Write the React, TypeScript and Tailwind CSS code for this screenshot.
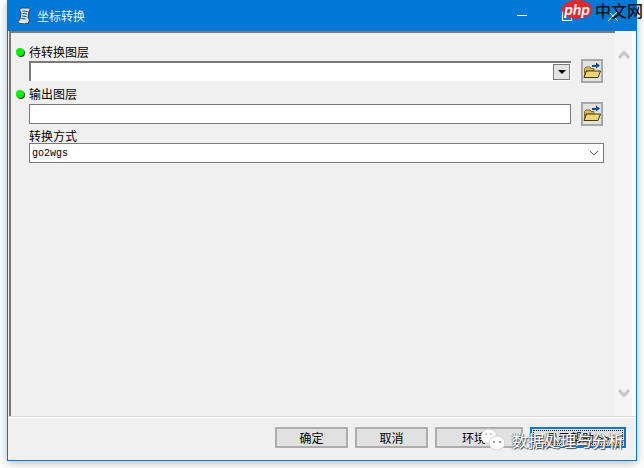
import React from "react";

const cjk = "font-['Microsoft_YaHei','Noto_Sans_CJK_SC','Noto_Sans',sans-serif]";

function FolderIcon() {
  return (
    <svg width="18" height="18" viewBox="0 0 18 18">
      <path d="M1.500 15V6.500L3 5h4l1 1.500h3V9H3z" fill="#d8b850" stroke="#8a7020" />
      <path d="M1 15.500 3.500 9H17.500L15 15.500z" fill="#f0d478" stroke="#4c3c08" />
      <path d="M9 3h4V0.500L17 3.500 13 6.500V5H9z" fill="#14508c" />
    </svg>
  );
}

function Dot() {
  return <span className="mr-[5px] h-[8px] w-[8px] shrink-0 rounded-full bg-[#00f000] shadow-[1px_1px_0_#444]" />;
}

function FolderButton() {
  return (
    <button className="ml-[10px] flex h-[24px] w-[22px] shrink-0 items-center justify-center border-2 border-[#a8a8a8] bg-[#e1e1e1]">
      <FolderIcon />
    </button>
  );
}

function Btn({ label, w }: { label: string; w: string }) {
  return (
    <button className={`flex h-[21px] items-center justify-center border-2 border-[#adadad] bg-[#e1e1e1] text-[12px] text-black ${w}`}>
      {label}
    </button>
  );
}

export default function App() {
  return (
    <div className={`relative h-[468px] w-[644px] overflow-hidden bg-white pl-[7px] ${cjk}`}>
      <div className="flex h-[461px] w-[630px] flex-col border border-t-0 border-[#0078d7] bg-[#f0f0f0] shadow-[0_2px_9px_rgba(0,0,0,0.28)]">
        {/* title bar */}
        <div className="flex h-[31px] shrink-0 items-center bg-[#0078d7] pl-[8px] text-white">
          <svg width="16" height="18" viewBox="0 0 16 18" className="mr-[5px]">
            <path d="M5 1h8l1.500 1-1.500 2-1 7 1.500 2-1.500 3.500H5L1.500 14.500 4 12.500 5 6 3.500 3z" fill="#cfe2f3" stroke="#2f4258" />
            <path d="M6.500 4l5 .5M6.500 6.500l4.500 .5M6 9l4.500 .5M5.500 11.500l4 .5" stroke="#2f4258" />
            <path d="M3 15l6 1" stroke="#fff" />
          </svg>
          <span className="text-[12px] text-[#e8f2fb]">坐标转换</span>
          <div className="ml-auto flex items-center pr-[18px]">
            <span className="h-px w-[10px] bg-white" />
            <span className="ml-[35px] h-[10px] w-[10px] border border-white" />
            <svg width="10" height="10" viewBox="0 0 10 10" className="ml-[36px]">
              <path d="M0 0l10 10M10 0 0 10" stroke="#fff" fill="none" />
            </svg>
          </div>
        </div>

        {/* body */}
        <div className="flex h-[385px] shrink-0 pl-[1px]">
          <div className="flex min-w-0 flex-1 flex-col border-l-2 border-t-2 border-[#7a7a7a] pl-[5px] pr-[12px] pt-[10px] text-[12px] text-black">
            <div className="flex h-[17px] items-center">
              <Dot />
              <span>待转换图层</span>
            </div>
            <div className="mt-[-1px] flex items-center pl-[13px]">
              <div className="flex h-[20px] flex-1 items-center justify-end border-l-2 border-t-2 border-[#7a7a7a] bg-white pr-[1px]">
                <span className="flex h-[16px] w-[17px] items-center justify-center border border-[#7a7a7a] bg-[#e4e4e4] text-black">
                  <svg width="8" height="4" viewBox="0 0 8 4">
                    <path d="M0 0h8L4 4z" fill="#000" />
                  </svg>
                </span>
              </div>
              <FolderButton />
            </div>
            <div className="mt-[2px] flex h-[17px] items-center">
              <Dot />
              <span>输出图层</span>
            </div>
            <div className="flex items-center pl-[13px]">
              <div className="h-[20px] flex-1 border border-[#7a7a7a] bg-white" />
              <FolderButton />
            </div>
            <div className="mt-[3px] pl-[13px] leading-[14px]">转换方式</div>
            <div className="ml-[13px] flex h-[20px] w-[575px] shrink-0 items-center border border-[#7a7a7a] bg-white pl-[2px] pr-[4px]">
              <span className="font-['Liberation_Mono',monospace] text-[10px]">go2wgs</span>
              <svg width="10" height="6" viewBox="0 0 10 6" className="ml-auto">
                <path d="M1 1l4 4 4-4" stroke="#555" fill="none" />
              </svg>
            </div>
          </div>
          {/* scrollbar */}
          <div className="flex w-[17px] shrink-0 flex-col items-center justify-between bg-[#f5f5f5] pb-[18px] pt-[19px]">
            <svg width="12" height="9" viewBox="0 0 12 9">
              <path d="M1 8l5-5.500 5 5.500" stroke="#c8c8c8" strokeWidth="3" fill="none" />
            </svg>
            <svg width="12" height="9" viewBox="0 0 12 9">
              <path d="M1 1l5 5.500 5-5.500" stroke="#c8c8c8" strokeWidth="3" fill="none" />
            </svg>
          </div>
          <div className="w-[4px] shrink-0 bg-white" />
        </div>

        {/* footer */}
        <div className="flex flex-1 items-start gap-[7px] border-t border-t-[#dcdcdc] pl-[267px] pt-[10px] shadow-[inset_0_1px_0_#fff]">
          <Btn label="确定" w="w-[73px]" />
          <Btn label="取消" w="w-[73px]" />
          <Btn label="环境..." w="w-[88px]" />
          <button className="h-[21px] w-[96px] border-2 border-[#0078d7] bg-[#e1e1e1] p-px">
            <span className="flex h-full w-full items-center justify-center border border-dotted border-black text-[12px] text-black">
              显示帮助 &gt;&gt;
            </span>
          </button>
        </div>
      </div>

      {/* php watermark */}
      <div className="absolute left-[562px] top-0 flex items-start whitespace-nowrap">
        <span className="flex h-[19px] w-[30px] items-center justify-center rounded-[50%] bg-[#e8262d] font-['Liberation_Sans',sans-serif] text-[14px] font-bold italic leading-none text-white">
          php
        </span>
        <span className="ml-[3px] mt-[2px] text-[16px] font-medium leading-none text-[#111]">中文网</span>
      </div>

      {/* wechat watermark */}
      <div className="absolute left-[480px] top-[428px] flex items-center whitespace-nowrap">
        <svg width="26" height="24" viewBox="0 0 26 24">
          <ellipse cx="9" cy="8.500" rx="8" ry="7.500" fill="#fff" stroke="#d0d0d0" />
          <ellipse cx="17" cy="15" rx="8" ry="7" fill="#fff" stroke="#d0d0d0" />
          <circle cx="14" cy="14" r="1" fill="#777" />
          <circle cx="20" cy="14" r="1" fill="#777" />
          <circle cx="6" cy="6" r="1" fill="#bbb" />
          <circle cx="11" cy="6" r="1" fill="#bbb" />
        </svg>
        <span className="ml-[6px] text-[16px] leading-none text-white [text-shadow:1px_1px_1px_#444,-1px_0_1px_#777]">数据处理与分析</span>
      </div>
    </div>
  );
}
